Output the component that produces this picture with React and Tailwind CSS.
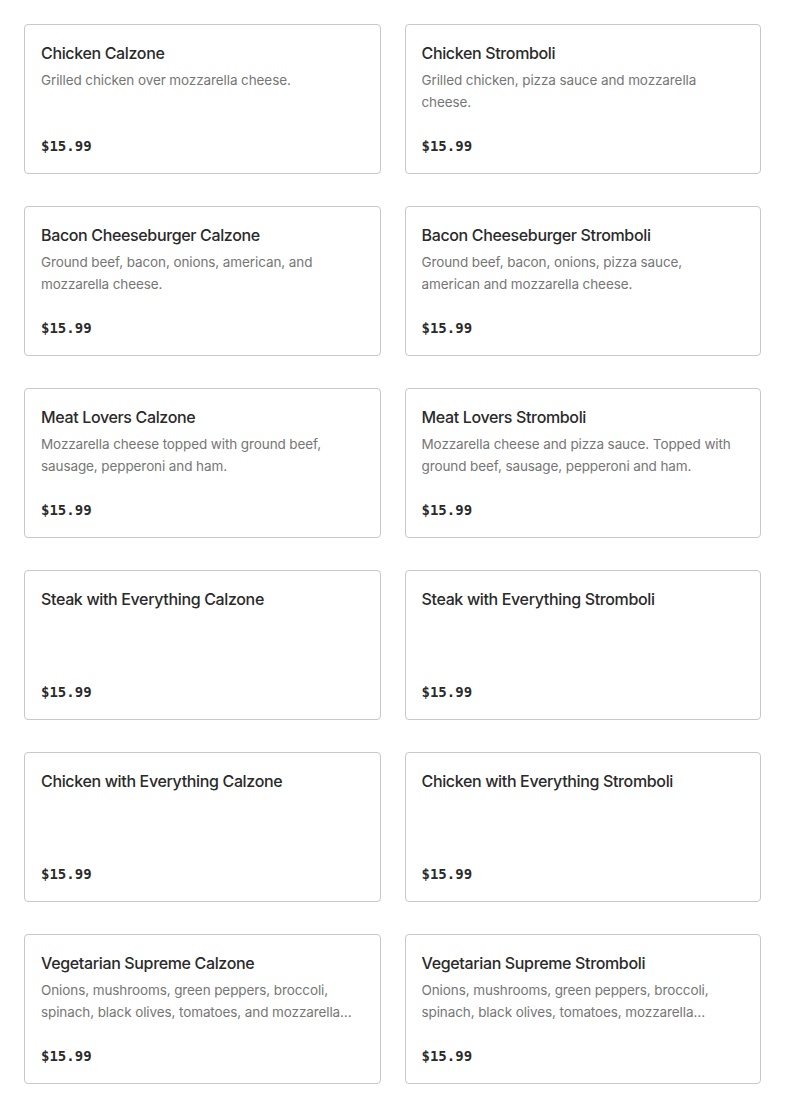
import React from "react";

const items = [
  { name: "Chicken Calzone", desc: "Grilled chicken over mozzarella cheese." },
  { name: "Chicken Stromboli", desc: "Grilled chicken, pizza sauce and mozzarella cheese." },
  { name: "Bacon Cheeseburger Calzone", desc: "Ground beef, bacon, onions, american, and mozzarella cheese." },
  { name: "Bacon Cheeseburger Stromboli", desc: "Ground beef, bacon, onions, pizza sauce, american and mozzarella cheese." },
  { name: "Meat Lovers Calzone", desc: "Mozzarella cheese topped with ground beef, sausage, pepperoni and ham." },
  { name: "Meat Lovers Stromboli", desc: "Mozzarella cheese and pizza sauce. Topped with ground beef, sausage, pepperoni and ham." },
  { name: "Steak with Everything Calzone", desc: "" },
  { name: "Steak with Everything Stromboli", desc: "" },
  { name: "Chicken with Everything Calzone", desc: "" },
  { name: "Chicken with Everything Stromboli", desc: "" },
  { name: "Vegetarian Supreme Calzone", desc: "Onions, mushrooms, green peppers, broccoli, spinach, black olives, tomatoes, and mozzarella cheese." },
  { name: "Vegetarian Supreme Stromboli", desc: "Onions, mushrooms, green peppers, broccoli, spinach, black olives, tomatoes, mozzarella provolone cheese and pizza sauce." },
];

// Kart bileşeni
const MenuCard = ({ item }) => (
  <div className="h-[150px] flex flex-col border border-[#c8c8c8] rounded-[4px] bg-white px-4 pt-4 pb-[17px]">
    <h3 className="text-[16px] leading-6 font-medium text-[#2a2a2a] tracking-[-0.35px]">{item.name}</h3>
    {item.desc && (
      <p className="mt-1 text-[13.5px] leading-[22px] text-[#767676] line-clamp-2 tracking-[-0.1px]">{item.desc}</p>
    )}
    <div className="mt-auto text-[14px] leading-5 font-bold text-[#2a2a2a] font-['DejaVu_Sans_Mono',monospace]">
      $15.99
    </div>
  </div>
);

export default function App() {
  return (
    <div className="min-h-screen bg-white font-['Inter',sans-serif]">
      <div className="grid grid-cols-2 gap-x-6 gap-y-8 p-6">
        {items.map((item) => (
          <MenuCard key={item.name} item={item} />
        ))}
      </div>
    </div>
  );
}
